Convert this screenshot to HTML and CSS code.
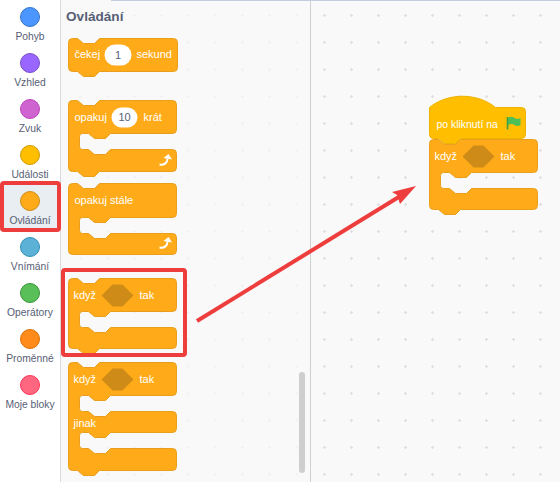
FILE: index.html

```html
<!DOCTYPE html>
<html lang="cs">
<head>
  <meta charset="UTF-8">
  <meta name="viewport" content="width=device-width, initial-scale=1.0">
  <title>Ovládání</title>
  <link rel="stylesheet" href="styles.css">
</head>
<body>

  <div class="editor">
    <!-- Categories -->
    <nav class="categories">
      <div class="category"><span class="dot dot-motion"></span>Pohyb</div>
      <div class="category"><span class="dot dot-looks"></span>Vzhled</div>
      <div class="category"><span class="dot dot-sound"></span>Zvuk</div>
      <div class="category"><span class="dot dot-events"></span>Události</div>
      <div class="category selected"><span class="dot dot-control"></span>Ovládání</div>
      <div class="category"><span class="dot dot-sensing"></span>Vnímání</div>
      <div class="category"><span class="dot dot-operators"></span>Operátory</div>
      <div class="category"><span class="dot dot-variables"></span>Proměnné</div>
      <div class="category"><span class="dot dot-myblocks"></span>Moje bloky</div>
    </nav>

    <!-- Block palette -->
    <section class="flyout">
      <h2>Ovládání</h2>

      <svg class="block block-wait" width="112" height="39" viewBox="-0.5 -0.5 112 39">
        <path class="shape" d="M0,4 Q0,0 4,0 H9 L15,5 H26 L31,0 H105 Q109,0 109,4 V29 Q109,33 105,33 H31 L26,38 H15 L9,33 H4 Q0,33 0,29 Z"/>
        <text x="6" y="19.500">čekej</text>
        <rect class="pill" x="36" y="6" width="27" height="21" rx="10.5"/>
        <text class="value" x="49.5" y="20">1</text>
        <text x="68" y="19.500">sekund</text>
      </svg>

      <svg class="block block-repeat" width="112" height="77" viewBox="-0.5 -0.5 112 77">
        <path class="shape" d="M0,4 Q0,0 4,0 H9 L15,5 H26 L31,0 H104 Q108,0 108,4 V29 Q108,33 104,33 H42 L37,38 H26 L20,33 H14 Q11,33 11,36 V46 Q11,49 14,49 H20 L26,54 H37 L42,49 H104 Q108,49 108,53 V67 Q108,71 104,71 H31 L26,76 H15 L9,71 H4 Q0,71 0,67 Z"/>
        <text x="6" y="20">opakuj</text>
        <rect class="pill" x="43" y="7" width="26" height="20" rx="10"/>
        <text class="value" x="56" y="20.500">10</text>
        <text x="75" y="20">krát</text>
        <path class="loop" d="M91,64 C96,65 99,62 99,58"/>
        <path class="loop-head" d="M100,53.500 L95,57.500 L103.500,59 Z"/>
      </svg>

      <svg class="block block-forever" width="112" height="73" viewBox="-0.5 -0.5 112 73">
        <path class="shape" d="M0,4 Q0,0 4,0 H9 L15,5 H26 L31,0 H104 Q108,0 108,4 V30 Q108,34 104,34 H42 L37,39 H26 L20,34 H14 Q11,34 11,37 V47 Q11,50 14,50 H20 L26,55 H37 L42,50 H104 Q108,50 108,54 V67 Q108,71 104,71 H4 Q0,71 0,67 Z"/>
        <text x="6" y="20">opakuj stále</text>
        <path class="loop" d="M91,64 C96,65 99,62 99,58"/>
        <path class="loop-head" d="M100,53.500 L95,57.500 L103.500,59 Z"/>
      </svg>

      <svg class="block block-if" width="112" height="77" viewBox="-0.5 -0.5 112 77">
        <path class="shape" d="M0,4 Q0,0 4,0 H9 L15,5 H26 L31,0 H104 Q108,0 108,4 V29 Q108,33 104,33 H42 L37,38 H26 L20,33 H14 Q11,33 11,36 V46 Q11,49 14,49 H20 L26,54 H37 L42,49 H104 Q108,49 108,53 V66 Q108,70 104,70 H31 L26,75 H15 L9,70 H4 Q0,70 0,66 Z"/>
        <text x="5" y="20.500">když</text>
        <polygon class="slot" points="33,17 44,6 54,6 65,17 54,28 44,28"/>
        <text x="71" y="20.500">tak</text>
      </svg>

      <svg class="block block-ifelse" width="112" height="115" viewBox="-0.5 -0.5 112 115">
        <path class="shape" d="M0,4 Q0,0 4,0 H9 L15,5 H26 L31,0 H104 Q108,0 108,4 V29 Q108,33 104,33 H42 L37,38 H26 L20,33 H14 Q11,33 11,36 V46 Q11,49 14,49 H20 L26,54 H37 L42,49 H104 Q108,49 108,53 V66 Q108,70 104,70 H42 L37,75 H26 L20,70 H14 Q11,70 11,73 V83 Q11,86 14,86 H20 L26,91 H37 L42,86 H104 Q108,86 108,90 V104 Q108,108 104,108 H31 L26,113 H15 L9,108 H4 Q0,108 0,104 Z"/>
        <text x="5" y="20.500">když</text>
        <polygon class="slot" points="33,17 44,6 54,6 65,17 54,28 44,28"/>
        <text x="71" y="20.500">tak</text>
        <text x="5" y="64">jinak</text>
      </svg>

      <div class="scrollbar"></div>
    </section>

    <!-- Workspace -->
    <main class="workspace">
      <svg class="script" width="110" height="121" viewBox="-0.5 -0.5 110 121">
        <g transform="translate(0,44)">
          <path class="shape" d="M0,4 Q0,0 4,0 H9 L15,5 H26 L31,0 H104 Q108,0 108,4 V29 Q108,33 104,33 H42 L37,38 H26 L20,33 H14 Q11,33 11,36 V46 Q11,49 14,49 H20 L26,54 H37 L42,49 H104 Q108,49 108,53 V66 Q108,70 104,70 H31 L26,75 H15 L9,70 H4 Q0,70 0,66 Z"/>
          <text x="5" y="20.500">když</text>
          <polygon class="slot" points="33,17 44,6 54,6 65,17 54,28 44,28"/>
          <text x="71" y="20.500">tak</text>
        </g>
        <path class="hat" d="M0,12 C18,-3 48,-3 66,12 H92 Q96,12 96,16 V39 Q96,43 92,43 H31 L26,48 H15 L9,43 H4 Q0,43 0,39 Z"/>
        <text class="hat-label" x="7" y="32">po kliknutí na</text>
        <path class="flag" d="M78,22.500 Q82,20 85,22.500 Q88,24.500 91,22.500 V29.500 Q88,31.500 85,29.500 Q82,27.500 78,30 Z"/>
        <path class="flag-pole" d="M78,21.500 V34"/>
      </svg>
    </main>
  </div>

  <!-- Annotations over the editor -->
  <div class="top-line"></div>
  <div class="mark mark-category"></div>
  <div class="mark mark-block"></div>
  <svg class="arrow" width="560" height="482" viewBox="0 0 560 482">
    <path class="arrow-line" d="M197,321 L402,195"/>
    <polygon class="arrow-head" points="416,186 392,192 397,195 400,204"/>
  </svg>

</body>
</html>
```

FILE: styles.css

```css
body {
  font-family: 'Liberation Sans', Arial, sans-serif;
  margin: 0;
  width: 560px;
  height: 482px;
  overflow: hidden;
  position: relative;
}

.editor {
  display: flex;
  height: 482px;
}

.top-line {
  position: absolute;
  left: 111px;
  right: 0;
  top: 0;
  height: 1px;
  background-color: #c6cce0;
}

/* categories */
.categories {
  width: 60px;
  flex-shrink: 0;
  padding-top: 1px;
  background-color: #fff;
  border-right: 1px solid #dadada;
}

.category {
  display: flex;
  flex-direction: column;
  align-items: center;
  height: 46px;
  padding-top: 6px;
  box-sizing: border-box;
  font-size: 10.3px;
  line-height: 12px;
  color: #575e75;
  white-space: nowrap;
}

.category.selected {
  background-color: #e9eef2;
}

.dot {
  width: 20px;
  height: 20px;
  box-sizing: border-box;
  border-radius: 50%;
  border: 1px solid;
  margin-bottom: 4px;
}

.dot-motion { background-color: #4c97ff; border-color: #3373cc; }
.dot-looks { background-color: #9966ff; border-color: #774dcb; }
.dot-sound { background-color: #cf63cf; border-color: #bd42bd; }
.dot-events { background-color: #ffbf00; border-color: #cc9900; }
.dot-control { background-color: #ffab19; border-color: #cf8b17; }
.dot-sensing { background-color: #5cb1d6; border-color: #2e8eb8; }
.dot-operators { background-color: #59c059; border-color: #389438; }
.dot-variables { background-color: #ff8c1a; border-color: #db6e00; }
.dot-myblocks { background-color: #ff6680; border-color: #ff3355; }

/* palette */
.flyout {
  width: 250px;
  flex-shrink: 0;
  position: relative;
  padding-left: 7px;
  box-sizing: border-box;
  background-color: #f9f9f9;
  background-image: radial-gradient(circle, #f1f1f1 1px, transparent 1.5px);
  background-size: 27px 27px;
  background-position: 6px 2px;
  border-right: 1px solid #d0d0d0;
}

.flyout h2 {
  font-size: 13.6px;
  line-height: 16px;
  color: #575e75;
  margin: 9px 0 13px -2px;
}

.block {
  display: block;
}

.block-repeat { margin-top: 23px; }
.block-forever { margin-top: 6px; }
.block-if { margin-top: 22px; }
.block-ifelse { margin-top: 7px; }

.shape {
  fill: #ffab19;
  stroke: #e99f1c;
}

.hat {
  fill: #ffbf00;
  stroke: #eeb200;
}

.block text, .script text {
  font-size: 11px;
  fill: #fff;
}

.script .hat-label {
  font-size: 10.4px;
}

.block .value {
  fill: #575e75;
  text-anchor: middle;
}

.pill {
  fill: #fff;
}

.slot {
  fill: #cf8b17;
}

.loop {
  fill: none;
  stroke: #fff;
  stroke-width: 2;
}

.loop-head {
  fill: #fff;
}

.flag {
  fill: #4cbf56;
}

.flag-pole {
  stroke: #3f9e45;
  stroke-width: 1.6;
  fill: none;
}

.scrollbar {
  position: absolute;
  left: 238px;
  top: 372px;
  width: 6px;
  height: 101px;
  border-radius: 3px;
  background-color: #cecece;
}

/* workspace */
.workspace {
  flex: 1;
  position: relative;
  background-color: #f9f9f9;
  background-image: radial-gradient(circle, #dfdfdf 1px, transparent 1.5px);
  background-size: 27px 27px;
  background-position: 0 2px;
}

.script {
  position: absolute;
  left: 118px;
  top: 95px;
}

/* annotations */
.mark {
  position: absolute;
  box-sizing: border-box;
  border: 4px solid #ee3d3d;
  border-radius: 4px;
}

.mark-category {
  left: 0;
  top: 181px;
  width: 61px;
  height: 51px;
}

.mark-block {
  left: 61px;
  top: 268px;
  width: 126px;
  height: 89px;
}

.arrow {
  position: absolute;
  left: 0;
  top: 0;
}

.arrow-line {
  stroke: #ee3d3d;
  stroke-width: 4;
  fill: none;
}

.arrow-head {
  fill: #ee3d3d;
}
```
